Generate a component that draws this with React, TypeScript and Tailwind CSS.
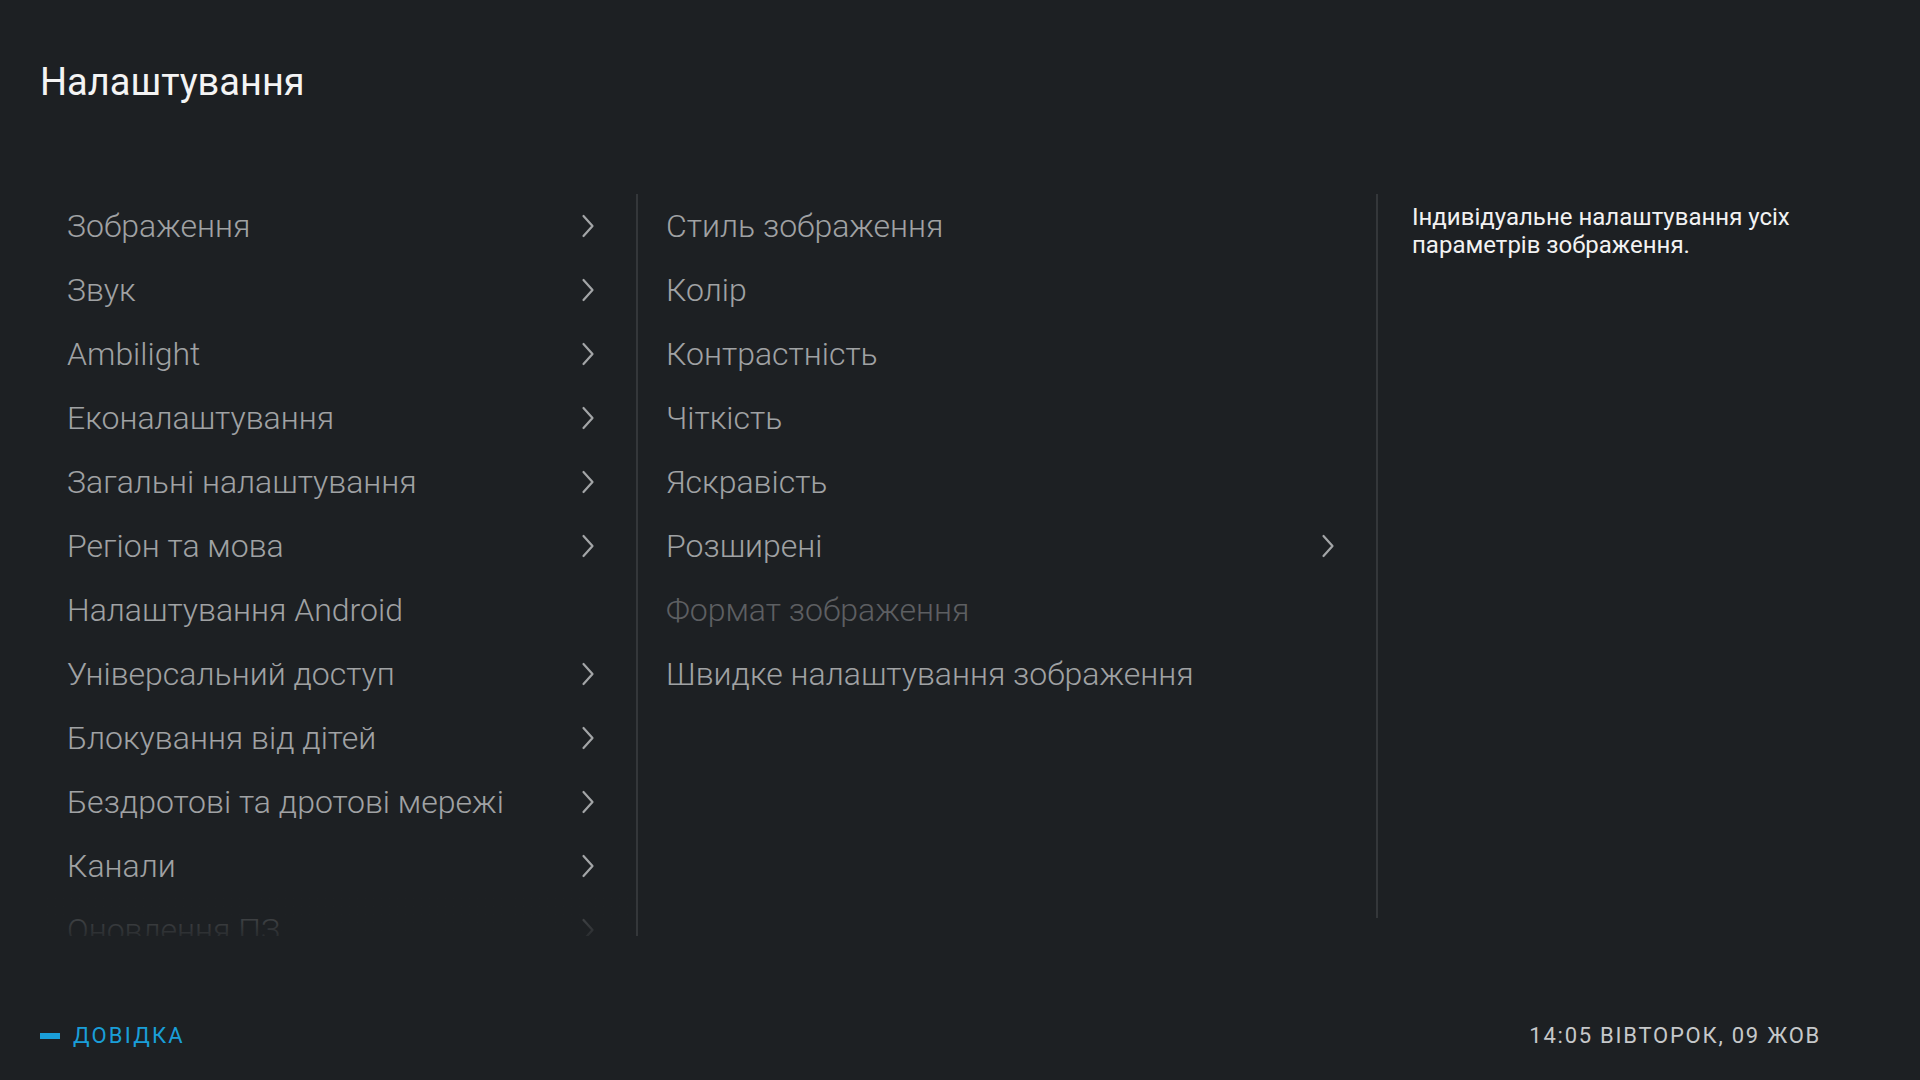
import React from "react"

const font = { fontFamily: "Roboto, 'Noto Sans', sans-serif" }
const light = { fontFamily: "'Roboto Light', Roboto, 'Noto Sans', sans-serif" }

function Chevron() {
  return (
    <svg width="14" height="24" viewBox="0 0 14 24" className="shrink-0">
      <polyline points="2.5,2 11.5,12 2.5,22" fill="none" stroke="#a3a5a7" strokeWidth="2.2" strokeLinecap="round" strokeLinejoin="round" />
    </svg>
  )
}

export default function App() {
  const mainMenu = [
    { label: "Зображення", sub: true },
    { label: "Звук", sub: true },
    { label: "Ambilight", sub: true },
    { label: "Еконалаштування", sub: true },
    { label: "Загальні налаштування", sub: true },
    { label: "Регіон та мова", sub: true },
    { label: "Налаштування Android", sub: false },
    { label: "Універсальний доступ", sub: true },
    { label: "Блокування від дітей", sub: true },
    { label: "Бездротові та дротові мережі", sub: true },
    { label: "Канали", sub: true },
    { label: "Оновлення ПЗ", sub: true },
  ]

  const pictureMenu = [
    { label: "Стиль зображення", sub: false, disabled: false },
    { label: "Колір", sub: false, disabled: false },
    { label: "Контрастність", sub: false, disabled: false },
    { label: "Чіткість", sub: false, disabled: false },
    { label: "Яскравість", sub: false, disabled: false },
    { label: "Розширені", sub: true, disabled: false },
    { label: "Формат зображення", sub: false, disabled: true },
    { label: "Швидке налаштування зображення", sub: false, disabled: false },
  ]

  return (
    <div className="h-screen w-full overflow-hidden bg-[#1d2023] flex flex-col" style={font}>
      {/* Header */}
      <div className="pt-[60px] pl-[40px]">
        <h1 className="text-[38px] leading-[44px] font-normal text-[#f4f4f4]">Налаштування</h1>
      </div>

      {/* Columns */}
      <div className="mt-[90px] pl-[40px] flex items-start">
        {/* Main menu */}
        <div className="relative w-[598px] h-[742px] border-r-2 border-[#34373a] overflow-hidden">
          <div className="pl-[27px] pr-[41px]" style={light}>
            {mainMenu.map((item) => (
              <div key={item.label} className="h-[64px] flex items-center justify-between">
                <span className="text-[32px] leading-[64px] font-light text-[#a0a2a4] whitespace-nowrap">{item.label}</span>
                {item.sub && <Chevron />}
              </div>
            ))}
          </div>
          <div className="absolute left-0 right-0 bottom-0 h-[46px] bg-linear-to-b from-[#1d2023]/50 to-[#1d2023]/90" />
        </div>

        {/* Picture submenu */}
        <div className="w-[740px] h-[724px] border-r-2 border-[#34373a] pl-[28px] pr-[41px]" style={light}>
          {pictureMenu.map((item) => (
            <div key={item.label} className="h-[64px] flex items-center justify-between">
              <span
                className={
                  item.disabled
                    ? "text-[32px] leading-[64px] font-light text-[#5d5f62] whitespace-nowrap"
                    : "text-[32px] leading-[64px] font-light text-[#a0a2a4] whitespace-nowrap"
                }
              >
                {item.label}
              </span>
              {item.sub && <Chevron />}
            </div>
          ))}
        </div>

        {/* Description */}
        <div className="pl-[34px] pt-[9px] w-[460px]">
          <p className="text-[24px] leading-[28px] text-[#f2f2f2] max-w-[400px]">
            Індивідуальне налаштування усіх параметрів зображення.
          </p>
        </div>
      </div>

      {/* Footer */}
      <div className="mt-[80px] h-[40px] pl-[40px] pr-[99px] flex items-center justify-between">
        <div className="flex items-center gap-[13px]">
          <span className="w-[20px] h-[6px] bg-[#1a9ed8]" />
          <span className="text-[22px] leading-[28px] tracking-[0.1em] text-[#1a9ed8]">ДОВІДКА</span>
        </div>
        <span className="text-[22px] leading-[28px] tracking-[0.08em] text-[#c6c8ca]">14:05 ВІВТОРОК, 09 ЖОВ</span>
      </div>
    </div>
  )
}
